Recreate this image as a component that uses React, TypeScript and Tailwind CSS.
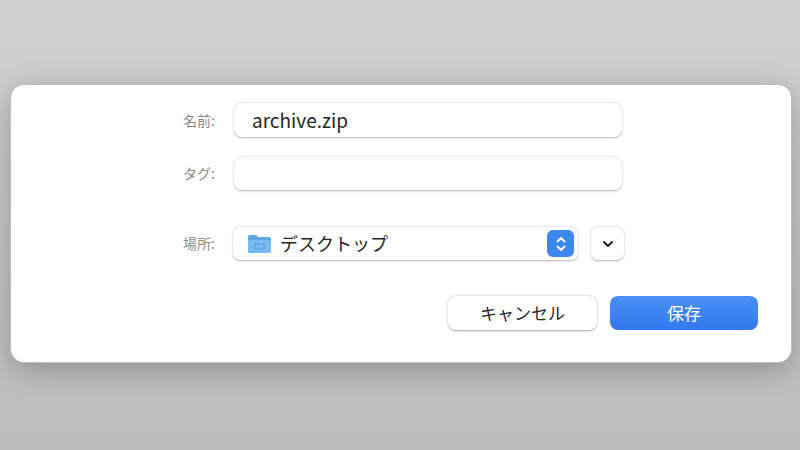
import React from "react";

const FONT = { fontFamily: '"Noto Sans CJK JP", "Noto Sans", sans-serif' };

const App = () => {
  return (
    <div
      className="w-[800px] h-[450px] overflow-hidden bg-gradient-to-b from-[#d0d0d0] to-[#bdbdbd] pt-[84px] pl-[10px]"
      style={FONT}
    >
      <div className="w-[782px] h-[279px] rounded-[14px] bg-white shadow-[0_8px_30px_rgba(0,0,0,0.25)] border border-[#bdbdbd] flex flex-col pt-[18px]">
        <div className="flex items-center h-[34px]">
          <div className="w-[206px] pr-[2px] text-right text-[14px] text-[#8a8a8a]">名前:</div>
          <div className="ml-[17px] w-[388px] h-[34px] rounded-[8px] bg-white shadow-[0_0.5px_2px_rgba(0,0,0,0.3)] flex items-center pl-[18px] text-[19px] text-[#262626]">
            archive.zip
          </div>
        </div>
        <div className="flex items-center h-[33px] mt-[20px]">
          <div className="w-[206px] pr-[2px] text-right text-[14px] text-[#8a8a8a]">タグ:</div>
          <div className="ml-[17px] w-[388px] h-[33px] rounded-[8px] bg-white shadow-[0_0.5px_2px_rgba(0,0,0,0.3)]" />
        </div>
        <div className="flex items-center h-[33px] mt-[37px]">
          <div className="w-[206px] pr-[2px] text-right text-[14px] text-[#8a8a8a]">場所:</div>
          <div className="ml-[16px] w-[345px] h-[33px] rounded-[7px] bg-white shadow-[0_0.5px_2px_rgba(0,0,0,0.3)] flex items-center pl-[14px] pr-[4px]">
            <svg width="25" height="20" viewBox="0 0 25 20">
              <path d="M1 3a2 2 0 0 1 2-2h6l2 2h11a2 2 0 0 1 2 2v12a2 2 0 0 1-2 2H3a2 2 0 0 1-2-2z" fill="#5fa9e8" />
              <path d="M1 6h23v11a2 2 0 0 1-2 2H3a2 2 0 0 1-2-2z" fill="#76bcf2" />
              <rect x="8" y="10" width="9" height="5" fill="none" stroke="#4f93cf" strokeWidth="0.8" />
            </svg>
            <span className="ml-[8px] text-[18px] text-[#262626]">デスクトップ</span>
            <div className="ml-auto w-[27px] h-[27px] rounded-[6px] bg-[#3d86ee] flex items-center justify-center">
              <svg width="12" height="18" viewBox="0 0 12 18" fill="none" stroke="white" strokeWidth="2" strokeLinecap="round" strokeLinejoin="round">
                <path d="M2.5 6.5 6 3l3.5 3.5M2.5 11.5 6 15l3.5-3.5" />
              </svg>
            </div>
          </div>
          <div className="ml-[13px] w-[33px] h-[33px] rounded-[7px] bg-white shadow-[0_0.5px_2px_rgba(0,0,0,0.3)] flex items-center justify-center">
            <svg width="12" height="8" viewBox="0 0 12 8" fill="none" stroke="#222" strokeWidth="2" strokeLinecap="round" strokeLinejoin="round">
              <path d="M2 2l4 4 4-4" />
            </svg>
          </div>
        </div>
        <div className="flex mt-[36px] pl-[437px] gap-[13px]">
          <div className="w-[149px] h-[34px] rounded-[8px] bg-white shadow-[0_0.5px_2px_rgba(0,0,0,0.35)] flex items-center justify-center text-[17px] text-[#262626]">
            キャンセル
          </div>
          <div className="w-[148px] h-[34px] rounded-[8px] bg-gradient-to-b from-[#4a8ff3] to-[#3379ee] flex items-center justify-center text-[17px] text-white">
            保存
          </div>
        </div>
      </div>
    </div>
  );
};

export default App;
